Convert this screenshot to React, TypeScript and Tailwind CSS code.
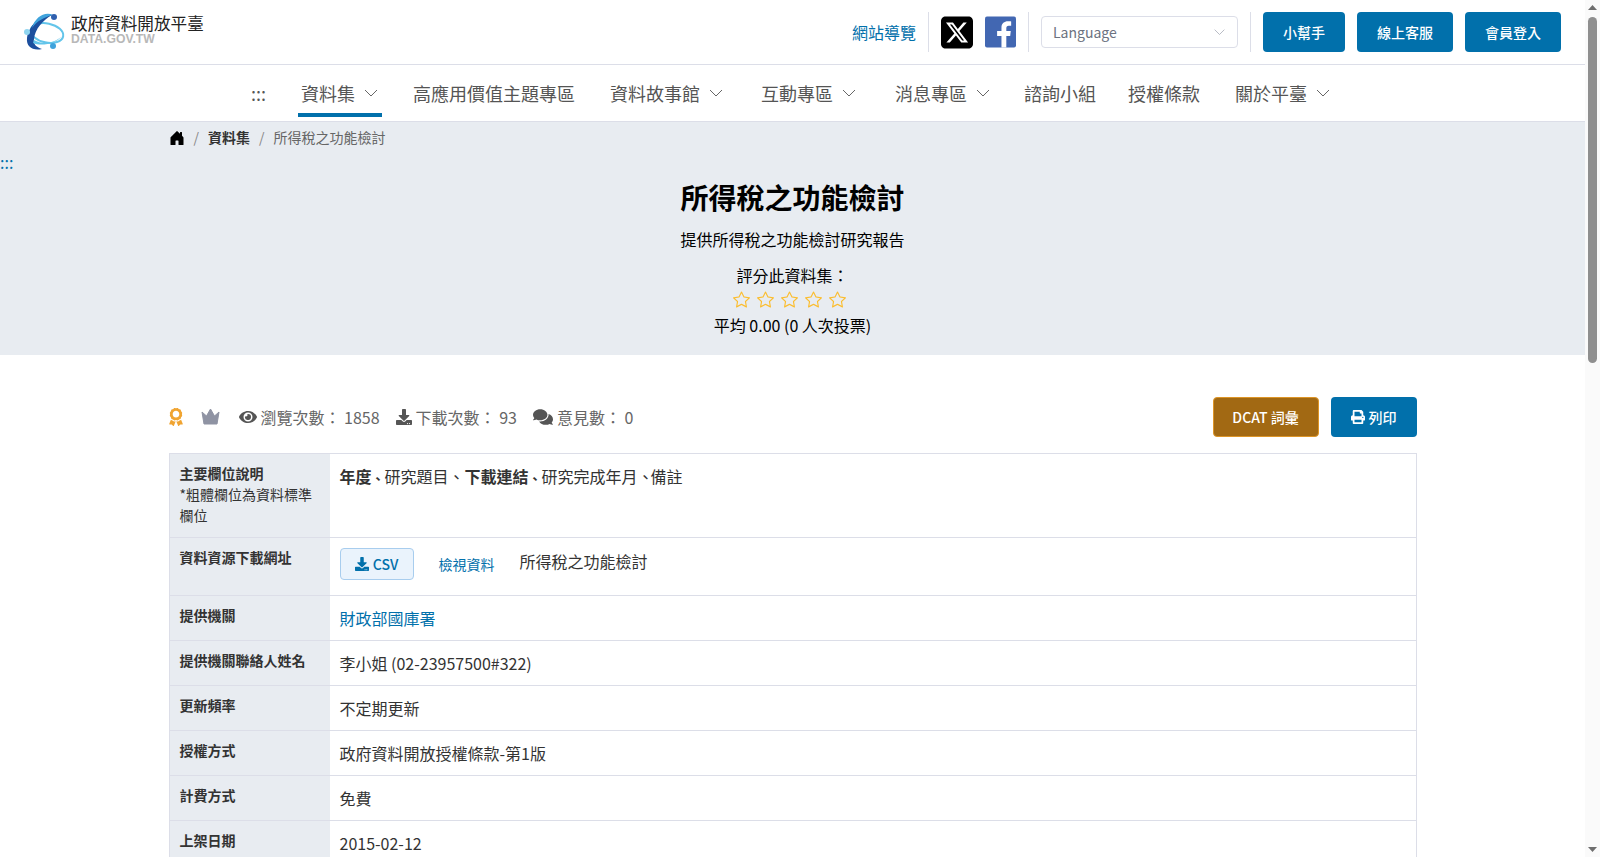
import React from 'react';
import { FaAward, FaComments, FaDownload, FaEye, FaPrint } from 'react-icons/fa';
import { FaSquareXTwitter } from 'react-icons/fa6';
import { BsHouseDoorFill, BsStar } from 'react-icons/bs';

const Chevron: React.FC<{ className?: string }> = ({ className }) => (
    <svg viewBox="0 0 16 10" fill="none" stroke="currentColor" strokeWidth="1" className={className}>
        <path d="M2 2l6 6 6-6" />
    </svg>
);

const Logo: React.FC = () => (
    <svg viewBox="0 0 44 40" className="w-[44px] h-[40px]">
        <ellipse cx="25" cy="21" rx="16.5" ry="9.5" fill="none" stroke="#63c5ea" strokeWidth="2" transform="rotate(12 25 21)" />
        <path d="M30 3C20 1 7 13 5 26c-1 9 6 13 15 11-6-2-9-5-8-10C13 17 21 8 30 3z" fill="#1c4f9e" />
        <path d="M31 3C23-1 13 5 10 16c5-7 12-11 21-13z" fill="#3fa3dc" />
        <path d="M12 28c8 5 20 4 28-4-5 7-20 11-29 7z" fill="#63c5ea" />
        <circle cx="32" cy="5" r="3" fill="#2f5fae" />
        <circle cx="5" cy="20" r="3" fill="#8fd5f0" />
        <circle cx="31" cy="34" r="3" fill="#3fa3dc" />
    </svg>
);

const Crown: React.FC = () => (
    <svg viewBox="0 0 19 16" className="ml-[18px] h-[16px] w-[19px]" fill="#8f93a3">
        <path d="M1 3l4.5 4L9.5 0l4 7L18 3l-2 12H3z" strokeLinejoin="round" stroke="#8f93a3" strokeWidth="1" />
    </svg>
);

const FacebookIcon: React.FC = () => (
    <svg viewBox="0 0 32 32" className="h-[32px] w-[31px]">
        <rect width="32" height="32" rx="2" fill="#4267b2" />
        <path d="M22 32V20h4l.6-5H22v-3c0-1.4.6-2.4 2.5-2.4H27V5.2C26.4 5 25 5 23.6 5 20 5 17 7.3 17 11.5V15h-4.5v5H17v12z" fill="#fff" />
    </svg>
);

const navItems = [
    { label: '資料集', sub: true, active: true, nudge: 'ml-[2px]' },
    { label: '高應用價值主題專區', nudge: '-ml-[2px]' },
    { label: '資料故事館', sub: true, nudge: '-ml-[1px]' },
    { label: '互動專區', sub: true, nudge: 'ml-[1px]' },
    { label: '消息專區', sub: true, nudge: 'ml-[2px]' },
    { label: '諮詢小組', nudge: '-ml-[3px]' },
    { label: '授權條款', nudge: '-ml-[4px]' },
    { label: '關於平臺', sub: true, nudge: '-ml-[1px]' },
];

const Row: React.FC<{ label: React.ReactNode; children: React.ReactNode }> = ({ label, children }) => (
    <div className="flex border-b border-[#dcdee8]">
        <div className="w-[160px] shrink-0 bg-[#e8ecf1] px-[10px] pt-[9px] pb-[11px] text-sm leading-[21px] text-[#333]">{label}</div>
        <div className="flex-1 p-[10px] text-base leading-6 text-[#333]">{children}</div>
    </div>
);

const App: React.FC = () => {
    return (
        <div className="min-h-[2038px] w-[1585px] bg-white font-['Noto_Sans_CJK_TC',sans-serif] text-[#333]">
            {/* Top bar */}
            <header className="flex h-[65px] items-center justify-between border-b border-[#dcdee8] pr-6 pl-[22px]">
                <div className="flex items-center gap-[5px]">
                    <Logo />
                    <div className="mb-[8px] flex flex-col">
                        <span className="text-[16.6px] leading-[21px] text-[#222]">政府資料開放平臺</span>
                        <span className="font-['Liberation_Sans',sans-serif] text-[12.2px] leading-[10px] font-bold text-[#b8b8b8]">DATA.GOV.TW</span>
                    </div>
                </div>
                <div className="flex items-center gap-3">
                    <a className="text-base text-[#0170ab]">網站導覽</a>
                    <div className="h-10 w-px bg-[#dcdee8]" />
                    <FaSquareXTwitter className="h-[37px] w-[32px] text-black" />
                    <FacebookIcon />
                    <div className="h-10 w-px bg-[#dcdee8]" />
                    <div className="flex h-8 w-[197px] items-center justify-between rounded border border-[#dcdee8] px-[11px] text-sm text-[#6c7280]">
                        <span>Language</span>
                        <Chevron className="w-[13px] text-[#a9adb8]" />
                    </div>
                    <div className="h-10 w-px bg-[#dcdee8]" />
                    <button className="h-10 w-[82px] rounded bg-[#0170ab] text-sm font-medium text-white">小幫手</button>
                    <button className="h-10 w-[96px] rounded bg-[#0170ab] text-sm font-medium text-white">線上客服</button>
                    <button className="h-10 w-[96px] rounded bg-[#0170ab] text-sm font-medium text-white">會員登入</button>
                </div>
            </header>

            {/* Main nav */}
            <nav className="flex h-[57px] justify-center gap-[30px] border-b border-[#dcdee8] text-[18px] text-[#555]">
                <a className="flex h-[52px] items-center border-b-4 border-transparent pt-2 text-[#555]">:::</a>
                {navItems.map((item) => (
                    <a
                        key={item.label}
                        className={`flex h-[52px] items-center gap-2 border-b-4 px-[3px] pt-2 ${item.active ? 'border-[#0170ab]' : 'border-transparent'} ${item.nudge ?? ''}`}
                    >
                        {item.label}
                        {item.sub && <Chevron className="w-4 text-[#666]" />}
                    </a>
                ))}
            </nav>

            {/* Hero */}
            <section className="bg-[#e8ecf1] pt-[5px] pb-[18px]">
                <div className="mx-auto flex w-[1248px] items-center text-sm leading-[21px]">
                    <BsHouseDoorFill className="h-[16px] w-[16px] text-black" />
                    <span className="mx-[9px] text-[#888]">/</span>
                    <span className="font-bold text-[#333]">資料集</span>
                    <span className="mx-[9px] text-[#888]">/</span>
                    <span className="text-[#666]">所得稅之功能檢討</span>
                </div>
                <a className="mt-[4px] block text-base leading-[21px] text-[#0170ab]">:::</a>
                <div className="text-center text-black">
                    <h1 className="mt-[3px] text-[28px] leading-[42px] font-bold">所得稅之功能檢討</h1>
                    <p className="mt-[9px] text-base leading-6">提供所得稅之功能檢討研究報告</p>
                    <p className="mt-3 text-base leading-6">評分此資料集：</p>
                    <div className="flex h-6 items-center justify-center gap-[7px] pr-[6px] text-[#fbbd2e]">
                        <BsStar className="h-[17px] w-[17px]" />
                        <BsStar className="h-[17px] w-[17px]" />
                        <BsStar className="h-[17px] w-[17px]" />
                        <BsStar className="h-[17px] w-[17px]" />
                        <BsStar className="h-[17px] w-[17px]" />
                    </div>
                    <p className="mt-[2px] text-base leading-6">平均 0.00 (0 人次投票)</p>
                </div>
            </section>

            {/* Dataset detail */}
            <main className="mx-auto mt-[42px] w-[1248px]">
                <div className="mb-4 flex h-10 items-center justify-between">
                    <div className="flex items-center text-base text-[#666]">
                        <FaAward className="h-[18px] w-[14px] text-[#f0a431]" />
                        <Crown />
                        <FaEye className="ml-[19px] h-[18px] w-[18px] text-[#555]" />
                        <span className="ml-[4px]">瀏覽次數： 1858</span>
                        <FaDownload className="ml-[16px] h-4 w-4 text-[#555]" />
                        <span className="ml-1">下載次數： 93</span>
                        <FaComments className="ml-[16px] h-[18px] w-[20px] text-[#555]" />
                        <span className="ml-[4px]">意見數： 0</span>
                    </div>
                    <div className="flex items-center gap-3">
                        <button className="h-10 w-[106px] rounded border border-[#dd9527] bg-[#a26913] text-sm font-medium text-white">DCAT 詞彙</button>
                        <button className="flex h-10 w-[86px] items-center justify-center gap-1 rounded bg-[#0170ab] text-sm font-medium text-white">
                            <FaPrint className="h-[14px] w-[14px]" />
                            列印
                        </button>
                    </div>
                </div>

                <div className="border-x border-t border-[#dcdee8]">
                    <Row
                        label={
                            <>
                                <b>主要欄位說明</b>
                                <br />
                                *粗體欄位為資料標準欄位
                            </>
                        }
                    >
                        <b>年度</b><b className="text-[13px]">、</b>研究題目、<b>下載連結</b><b className="text-[13px]">、</b>研究完成年月<span className="tracking-[-3px]">、</span>備註
                    </Row>
                    <Row label={<b>資料資源下載網址</b>}>
                        <div className="mb-[5px] flex items-center">
                            <a className="flex h-8 w-[74px] items-center justify-center gap-1 rounded border border-[#a8cdee] bg-[#eaf3fc] text-sm font-medium text-[#0170ab]">
                                <FaDownload className="h-[14px] w-[14px]" />
                                CSV
                            </a>
                            <a className="ml-[25px] text-sm text-[#0170ab]">檢視資料</a>
                            <span className="ml-[25px] -translate-y-[3px]">所得稅之功能檢討</span>
                        </div>
                    </Row>
                    <Row label={<b>提供機關</b>}>
                        <a className="text-[#0170ab]">財政部國庫署</a>
                    </Row>
                    <Row label={<b>提供機關聯絡人姓名</b>}>李小姐 (02-23957500#322)</Row>
                    <Row label={<b>更新頻率</b>}>不定期更新</Row>
                    <Row label={<b>授權方式</b>}>政府資料開放授權條款-第1版</Row>
                    <Row label={<b>計費方式</b>}>免費</Row>
                    <Row label={<b>上架日期</b>}>2015-02-12</Row>
                </div>
            </main>

            {/* Page scrollbar */}
            <div className="fixed top-0 right-0 h-screen w-[15px] bg-[#fafafa]">
                <svg viewBox="0 0 15 15" className="absolute top-0 left-0 h-[15px] w-[15px]" fill="#6e6e6e">
                    <path d="M7.5 5L12 10H3z" />
                </svg>
                <div className="absolute top-[17px] left-[3px] h-[346px] w-[9px] rounded-full bg-[#8f8f8f]" />
                <svg viewBox="0 0 15 15" className="absolute bottom-0 left-0 h-[15px] w-[15px]" fill="#6e6e6e">
                    <path d="M7.5 10L12 5H3z" />
                </svg>
            </div>
        </div>
    );
};

export default App;
